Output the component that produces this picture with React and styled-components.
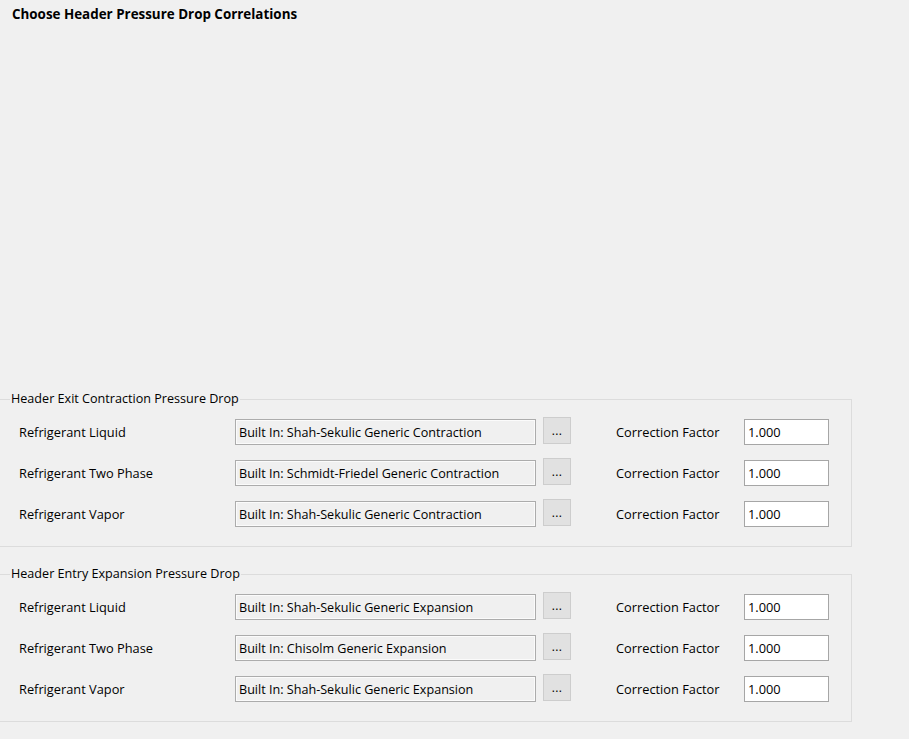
import React from 'react';
import styled, { createGlobalStyle } from 'styled-components';

const GlobalStyle = createGlobalStyle`
  html, body {
    margin: 0;
    padding: 0;
    background: #f0f0f0;
  }
  body {
    font-family: 'Open Sans', 'Liberation Sans', sans-serif;
    font-size: 12.8px;
    color: #000;
  }
`;

const Page = styled.div`
  width: 909px;
  height: 739px;
  box-sizing: border-box;
  display: flex;
  flex-direction: column;
  padding: 6px 0 17px 0;
  overflow: hidden;
`;

const Title = styled.div`
  font-weight: 700;
  font-size: 13.4px;
  line-height: 17px;
  padding-left: 12px;
`;

const Groups = styled.div`
  margin-top: auto;
  display: flex;
  flex-direction: column;
  gap: 19px;
`;

const Group = styled.fieldset`
  margin: 0 0 0 -2px;
  width: 854px;
  box-sizing: border-box;
  min-inline-size: 0;
  border: 1px solid #dcdcdc;
  padding: 12px 0 19px 20px;
  display: flex;
  flex-direction: column;
  gap: 15px;
`;

const Legend = styled.legend`
  margin-left: -9px;
  padding: 0 1px;
  font-size: 12.6px;
  line-height: 16px;
`;

const Row = styled.div`
  display: grid;
  grid-template-columns: 216px 301px 7px 28px 45px 128px 85px;
  align-items: center;
  height: 26px;
`;

const Label = styled.span`
  white-space: nowrap;
`;

const Field = styled.div`
  grid-column: ${(p) => p.col};
  height: 26px;
  box-sizing: border-box;
  border: 1px solid ${(p) => (p.readOnly ? '#acacac' : '#a6a6a6')};
  background: ${(p) => (p.readOnly ? '#f0f0f0' : '#ffffff')};
  box-shadow: ${(p) => (p.readOnly ? 'inset 0 0 0 1px #fbfbfb' : 'none')};
  display: flex;
  align-items: center;
  padding-left: 3px;
  font-size: ${(p) => (p.readOnly ? '12.6px' : '12.8px')};
  white-space: nowrap;
  overflow: hidden;
`;

const DotsButton = styled.button`
  grid-column: 4;
  align-self: start;
  margin-top: -2px;
  width: 28px;
  height: 27px;
  box-sizing: border-box;
  border: 1px solid #cdcdcd;
  background: #e1e1e1;
  padding: 0;
  font-family: inherit;
  font-size: 12px;
  line-height: 1;
  color: #000;
  letter-spacing: 0.3px;
`;

const FactorLabel = styled.span`
  grid-column: 6;
  white-space: nowrap;
`;

const groups = [
  {
    title: 'Header Exit Contraction Pressure Drop',
    rows: [
      ['Refrigerant Liquid', 'Built In: Shah-Sekulic Generic Contraction'],
      ['Refrigerant Two Phase', 'Built In: Schmidt-Friedel Generic Contraction'],
      ['Refrigerant Vapor', 'Built In: Shah-Sekulic Generic Contraction'],
    ],
  },
  {
    title: 'Header Entry Expansion Pressure Drop',
    rows: [
      ['Refrigerant Liquid', 'Built In: Shah-Sekulic Generic Expansion'],
      ['Refrigerant Two Phase', 'Built In: Chisolm Generic Expansion'],
      ['Refrigerant Vapor', 'Built In: Shah-Sekulic Generic Expansion'],
    ],
  },
];

function CorrelationRow({ phase, correlation }) {
  return (
    <Row>
      <Label>{phase}</Label>
      <Field col={2} readOnly>{correlation}</Field>
      <DotsButton>...</DotsButton>
      <FactorLabel>Correction Factor</FactorLabel>
      <Field col={7}>1.000</Field>
    </Row>
  );
}

export default function App() {
  return (
    <>
      <GlobalStyle />
      <Page>
        <Title>Choose Header Pressure Drop Correlations</Title>
        <Groups>
          {groups.map((g) => (
            <Group key={g.title}>
              <Legend>{g.title}</Legend>
              {g.rows.map(([phase, correlation]) => (
                <CorrelationRow key={phase} phase={phase} correlation={correlation} />
              ))}
            </Group>
          ))}
        </Groups>
      </Page>
    </>
  );
}
